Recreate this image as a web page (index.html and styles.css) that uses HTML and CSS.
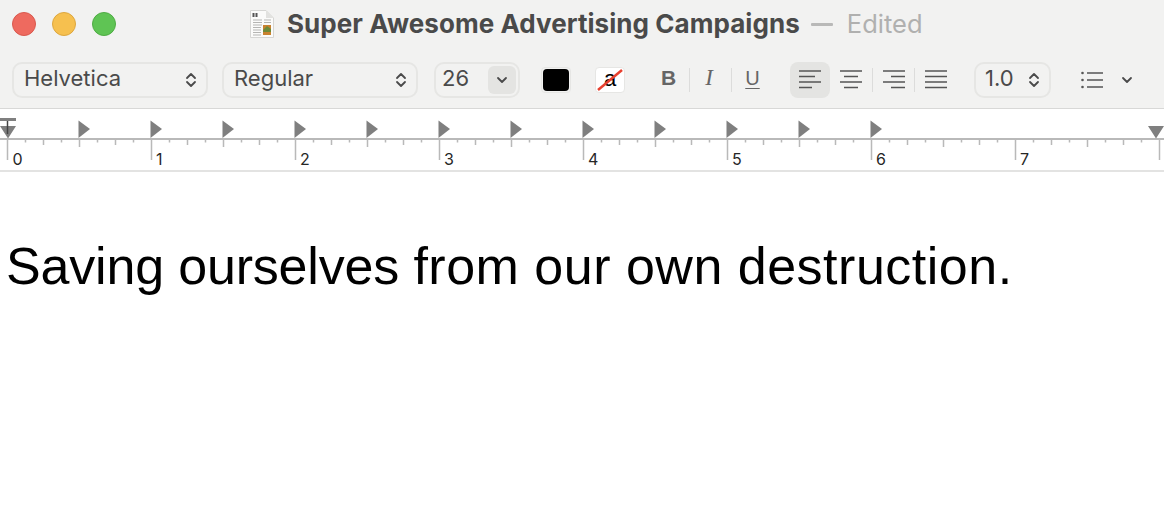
FILE: index.html
```html
<!DOCTYPE html>
<html lang="en">
<head>
<meta charset="utf-8">
<title>Super Awesome Advertising Campaigns</title>
<link rel="stylesheet" href="styles.css">
</head>
<body>
<div class="window">
  <header class="titlebar">
    <div class="lights">
      <span class="light red"></span>
      <span class="light yellow"></span>
      <span class="light green"></span>
    </div>
    <svg class="doc-icon" width="26" height="30" viewBox="0 0 26 30">
      <path d="M1.5 1.5H17L24.5 9V28.5H1.5Z" fill="#fbfbfa" stroke="#d6d6d4"/>
      <path d="M17 1.5V9H24.5Z" fill="#e2e2e0"/>
      <path d="M4.5 4v4M7.5 4v4" stroke="#555" stroke-width="2"/>
      <path d="M4 11h9M4 13.5h9M4 16h9M4 18.5h8M4 21h8M4 23.5h8M4 26h8M15 11h7M15 13.5h7" stroke="#b5b5b3" stroke-width="1"/>
      <rect x="14" y="16" width="8" height="10" fill="#c9822f"/>
      <path d="M14 21l4-4 4 3v3h-8Z" fill="#6d8a3a"/>
    </svg>
    <h1 class="doc-title">Super Awesome Advertising Campaigns</h1>
    <span class="dash"></span>
    <span class="edited">Edited</span>
  </header>

  <div class="toolbar">
    <div class="select font-select"><span class="select-label">Helvetica</span>
      <svg class="updown" width="12" height="16" viewBox="0 0 12 16"><path d="M2 6l4-4 4 4M2 10l4 4 4-4"/></svg>
    </div>
    <div class="select style-select"><span class="select-label">Regular</span>
      <svg class="updown" width="12" height="16" viewBox="0 0 12 16"><path d="M2 6l4-4 4 4M2 10l4 4 4-4"/></svg>
    </div>
    <div class="select size-select"><span class="select-label">26</span>
      <span class="size-arrow"><svg class="updown" width="12" height="8" viewBox="0 0 12 8"><path d="M2 2l4 4 4-4"/></svg></span>
    </div>
    <span class="well text-well"><span class="swatch"></span></span>
    <span class="well bg-well"><span class="a-glyph">a</span>
      <svg class="strike" width="26" height="22" viewBox="0 0 26 22"><path d="M1 21L25 1"/></svg>
    </span>
    <div class="style-group">
      <span class="style-btn bold">B</span>
      <span class="sep"></span>
      <span class="style-btn italic">I</span>
      <span class="sep"></span>
      <span class="style-btn underline">U</span>
    </div>
    <div class="align-group">
      <span class="align-btn active">
        <svg width="22" height="20" viewBox="0 0 22 20"><path d="M0 1h22M0 6.500h16M0 12h22M0 17.500h13"/></svg>
      </span>
      <span class="align-btn center-btn">
        <svg width="22" height="20" viewBox="0 0 22 20"><path d="M0 1h22M4 6.500h14M0 12h22M4 17.500h14"/></svg>
      </span>
      <span class="sep"></span>
      <span class="align-btn">
        <svg width="22" height="20" viewBox="0 0 22 20"><path d="M0 1h22M8 6.500h14M0 12h22M8 17.500h14"/></svg>
      </span>
      <span class="sep"></span>
      <span class="align-btn">
        <svg width="22" height="20" viewBox="0 0 22 20"><path d="M0 1h22M0 6.500h22M0 12h22M0 17.500h22"/></svg>
      </span>
    </div>
    <div class="select spacing-select"><span class="select-label">1.0</span>
      <svg class="updown" width="12" height="16" viewBox="0 0 12 16"><path d="M2 6l4-4 4 4M2 10l4 4 4-4"/></svg>
    </div>
    <svg class="list-icon" width="22" height="18" viewBox="0 0 22 18">
      <circle cx="1.500" cy="2" r="1.300"/><circle cx="1.500" cy="9" r="1.300"/><circle cx="1.500" cy="16" r="1.300"/>
      <path d="M6 2h16M6 9h16M6 16h16"/>
    </svg>
    <svg class="updown list-arrow" width="12" height="8" viewBox="0 0 12 8"><path d="M2 2l4 4 4-4"/></svg>
  </div>

  <svg class="ruler" width="1164" height="61" viewBox="0 109 1164 61">
    <defs>
      <g id="inch">
        <path d="M18 139v3.500M36 139v6M54 139v3.500M72 139v8M90 139v3.500M108 139v6M126 139v3.500M0 139v21"/>
      </g>
      <path id="tab" d="M0 120.500l11.500 8.500-11.500 9Z"/>
    </defs>
    <rect x="0" y="138" width="1164" height="2" class="base"/>
    <g class="ticks" transform="translate(7.500 0)">
      <use href="#inch" x="0"/><use href="#inch" x="144"/><use href="#inch" x="288"/><use href="#inch" x="432"/>
      <use href="#inch" x="576"/><use href="#inch" x="720"/><use href="#inch" x="864"/><use href="#inch" x="1008"/>
      <path d="M1152 139v21"/>
    </g>
    <g class="tabs">
      <use href="#tab" x="78.500"/><use href="#tab" x="150.500"/><use href="#tab" x="222.500"/><use href="#tab" x="294.500"/>
      <use href="#tab" x="366.500"/><use href="#tab" x="438.500"/><use href="#tab" x="510.500"/><use href="#tab" x="582.500"/>
      <use href="#tab" x="654.500"/><use href="#tab" x="726.500"/><use href="#tab" x="798.500"/><use href="#tab" x="870.500"/>
      <path d="M0 126h16l-8 12.500ZM1148 126h16l-8 12.500Z"/>
      <rect x="0" y="118" width="16" height="3"/>
    </g>
    <path class="indent-stem" d="M7.500 121v13"/>
    <g class="ruler-labels">
      <text x="12.500" y="164.500">0</text><text x="156" y="164.500">1</text><text x="300" y="164.500">2</text><text x="444" y="164.500">3</text>
      <text x="588" y="164.500">4</text><text x="732" y="164.500">5</text><text x="876" y="164.500">6</text><text x="1020" y="164.500">7</text>
    </g>
  </svg>

  <main class="document">
    <p class="doc-text"><span class="run-a">Saving ourselves </span><span class="run-b">from our own destruction.</span></p>
  </main>
</div>
</body>
</html>
```
FILE: styles.css
```css
* { box-sizing: border-box; }
html, body { margin: 0; padding: 0; height: 100%; background: #fff; overflow: hidden; }
.window { width: 1164px; height: 516px; display: flex; flex-direction: column; font-family: Inter, "Liberation Sans", sans-serif; }

.titlebar { height: 48px; background: #f2f2f1; display: flex; align-items: center; padding-left: 12px; }
.lights { display: flex; gap: 16px; width: 237px; }
.light { width: 24px; height: 24px; border-radius: 50%; border: 1px solid; }
.red { background: #ee6a5f; border-color: #d9594e; }
.yellow { background: #f6c04f; border-color: #dda73f; }
.green { background: #5fc454; border-color: #4fac44; }
.doc-icon { flex: none; }
.doc-title { margin: 0 0 0 12px; font-size: 26px; font-weight: 700; letter-spacing: 0.060px; color: #4a4a4a; line-height: 28px; white-space: nowrap; }
.dash { width: 22px; height: 3px; background: #b9b9b8; margin: 0 14px 0 11px; border-radius: 1px; }
.edited { font-size: 25.500px; color: #b0b0af; line-height: 28px; }

.toolbar { height: 61px; background: #f2f2f1; border-bottom: 1px solid #d8d8d7; display: flex; align-items: center; padding: 3px 0 0 12px; color: #4a4a4a; }
.select { height: 36px; border: 2px solid #e6e6e4; border-radius: 10px; display: flex; align-items: center; justify-content: space-between; font-size: 22px; color: #4a4a4a; padding: 0 9px 0 10px; flex: none; }
.select-label { margin-top: -3px; }
.font-select, .style-select { width: 196px; margin-right: 14px; }
.style-select { margin-right: 16px; }
.size-select { width: 86px; margin-right: 21px; padding: 0 2px 0 6px; }
.size-arrow { width: 28px; height: 28px; background: #e4e4e2; border-radius: 6px; display: flex; align-items: center; justify-content: center; }
.updown { flex: none; }
.updown path { fill: none; stroke: #4a4a4a; stroke-width: 1.800; stroke-linecap: round; stroke-linejoin: round; }

.well { width: 30px; height: 26px; flex: none; border-radius: 4px; border: 1px solid #e6e6e4; position: relative; display: flex; align-items: center; justify-content: center; }
.text-well { margin-right: 24px; padding: 1px; }
.swatch { display: block; width: 100%; height: 100%; background: #000; border-radius: 4px; }
.bg-well { background: #fff; overflow: hidden; margin-right: 23px; }
.a-glyph { font-family: "Liberation Sans", sans-serif; font-size: 22px; line-height: 22px; color: #000; margin-top: -2px; }
.strike { position: absolute; left: 1px; top: 1px; }
.strike path { stroke: #e8402f; stroke-width: 2.500; fill: none; }

.style-group { display: flex; align-items: center; flex: none; width: 142px; }
.style-btn { width: 41px; text-align: center; font-size: 21px; color: #666; line-height: 24px; margin-top: -3px; }
.bold { font-family: "Liberation Sans", sans-serif; font-weight: 700; }
.italic { font-family: "Liberation Serif", serif; font-style: italic; font-size: 23px; padding-right: 3px; }
.underline { font-family: "Liberation Sans", sans-serif; text-decoration: underline; text-underline-offset: 3px; text-decoration-thickness: 1px; font-size: 20px; }
.sep { width: 1px; height: 24px; background: #dcdcdb; flex: none; }

.align-group { display: flex; align-items: center; flex: none; margin-right: 18px; }
.align-btn { width: 41px; height: 36px; border-radius: 8px; display: flex; align-items: center; justify-content: center; }
.align-btn svg path { stroke: #555; stroke-width: 1.500; fill: none; }
.active { background: #e4e4e2; width: 40px; }
.center-btn { width: 42px; }
.align-btn svg { display: block; }

.spacing-select { width: 77px; margin-right: 30px; padding: 0 9px; }
.list-icon { flex: none; margin-right: 18px; }
.list-icon path { stroke: #555; stroke-width: 1.500; fill: none; }
.list-icon circle { fill: #555; }

.ruler { display: block; flex: none; box-sizing: content-box; background: #fff; border-bottom: 2px solid #e3e3e2; }
.base { fill: #b9b9b9; }
.ticks path, .ticks use { stroke: #b9b9b9; stroke-width: 1.500; fill: none; }
.tabs { fill: #7f7f7f; }
.indent-stem { stroke: #444; stroke-width: 1.500; fill: none; }
.ruler-labels text { font-family: Inter, "Liberation Sans", sans-serif; font-size: 16px; fill: #262626; }

.document { flex: 1; background: #fff; }
.doc-text { margin: 64px 0 0 6px; font-family: "Liberation Sans", Arial, sans-serif; font-size: 52px; line-height: 60px; color: #000; white-space: nowrap; }
.run-a { letter-spacing: -0.180px; }
.run-b { letter-spacing: 0.500px; }
```
